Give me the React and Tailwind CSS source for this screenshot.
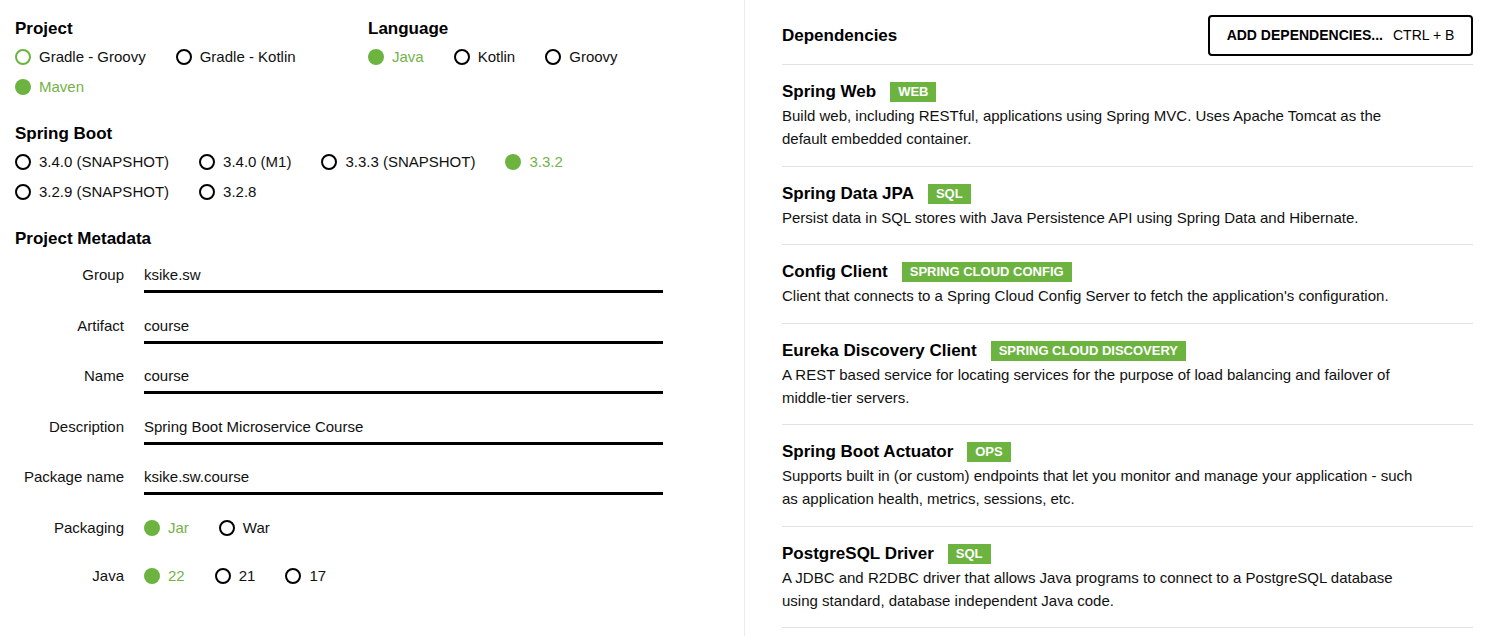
import React, { useState } from 'react';

const GREEN = '#6db33f';

const Radio = ({ label, checked, hover, onSelect }) => {
    return (
        <button
            type="button"
            onClick={onSelect}
            className="mr-[30px] flex h-[30px] items-center whitespace-nowrap"
        >
            {checked ? (
                <span className="h-4 w-4 shrink-0 rounded-full bg-[#6db33f]" />
            ) : (
                <span
                    className={
                        hover
                            ? 'h-4 w-4 shrink-0 rounded-full border-2 border-[#6db33f]'
                            : 'h-4 w-4 shrink-0 rounded-full border-2 border-black'
                    }
                />
            )}
            <span
                className={
                    checked
                        ? 'ml-2 text-[15px] leading-5 text-[#74b249]'
                        : 'ml-2 text-[15px] leading-5 text-[#111]'
                }
            >
                {label}
            </span>
        </button>
    );
};

const RadioGroup = ({ options, value, onChange, hover }) => (
    <div className="flex flex-wrap">
        {options.map((o) => (
            <Radio
                key={o}
                label={o}
                checked={value === o}
                hover={hover === o}
                onSelect={() => onChange(o)}
            />
        ))}
    </div>
);

const Field = ({ label, value, onChange }) => (
    <div className="flex items-start">
        <label className="w-[109px] shrink-0 pt-[11px] text-right text-[15px] leading-5 text-[#111]">
            {label}
        </label>
        <input
            type="text"
            value={value}
            onChange={(e) => onChange(e.target.value)}
            className="ml-5 w-[519px] border-b-[3px] border-black bg-transparent pt-[11px] pb-[5px] text-[15px] leading-5 text-[#111] outline-none"
        />
    </div>
);

const deps = [
    {
        name: 'Spring Web',
        tag: 'WEB',
        desc: 'Build web, including RESTful, applications using Spring MVC. Uses Apache Tomcat as the default embedded container.',
    },
    {
        name: 'Spring Data JPA',
        tag: 'SQL',
        desc: 'Persist data in SQL stores with Java Persistence API using Spring Data and Hibernate.',
    },
    {
        name: 'Config Client',
        tag: 'SPRING CLOUD CONFIG',
        desc: "Client that connects to a Spring Cloud Config Server to fetch the application's configuration.",
    },
    {
        name: 'Eureka Discovery Client',
        tag: 'SPRING CLOUD DISCOVERY',
        desc: 'A REST based service for locating services for the purpose of load balancing and failover of middle-tier servers.',
    },
    {
        name: 'Spring Boot Actuator',
        tag: 'OPS',
        desc: 'Supports built in (or custom) endpoints that let you monitor and manage your application - such as application health, metrics, sessions, etc.',
    },
    {
        name: 'PostgreSQL Driver',
        tag: 'SQL',
        desc: 'A JDBC and R2DBC driver that allows Java programs to connect to a PostgreSQL database using standard, database independent Java code.',
    },
];

const App = () => {
    const [project, setProject] = useState('Maven');
    const [language, setLanguage] = useState('Java');
    const [boot, setBoot] = useState('3.3.2');
    const [packaging, setPackaging] = useState('Jar');
    const [java, setJava] = useState('22');
    const [meta, setMeta] = useState({
        group: 'ksike.sw',
        artifact: 'course',
        name: 'course',
        description: 'Spring Boot Microservice Course',
        packageName: 'ksike.sw.course',
    });

    const setField = (key) => (v) => setMeta({ ...meta, [key]: v });

    return (
        <div
            className="flex h-[636px] w-[1492px] overflow-hidden bg-white text-[#111]"
            style={{ fontFamily: '"Liberation Sans", Arial, sans-serif' }}
        >
            {/* left: project options */}
            <div className="w-[745px] shrink-0 border-r border-[#ececec] pt-[19px] pl-[15px]">
                <div className="flex">
                    <div className="w-[353px]">
                        <h2 className="text-[17px] font-bold leading-5 text-black">Project</h2>
                        <div className="mt-[3px]">
                            <RadioGroup
                                options={['Gradle - Groovy', 'Gradle - Kotlin', 'Maven']}
                                value={project}
                                onChange={setProject}
                                hover="Gradle - Groovy"
                            />
                        </div>
                    </div>
                    <div>
                        <h2 className="text-[17px] font-bold leading-5 text-black">Language</h2>
                        <div className="mt-[3px]">
                            <RadioGroup
                                options={['Java', 'Kotlin', 'Groovy']}
                                value={language}
                                onChange={setLanguage}
                            />
                        </div>
                    </div>
                </div>

                <h2 className="mt-[22px] text-[17px] font-bold leading-5 text-black">Spring Boot</h2>
                <div className="mt-[3px] w-[600px]">
                    <RadioGroup
                        options={[
                            '3.4.0 (SNAPSHOT)',
                            '3.4.0 (M1)',
                            '3.3.3 (SNAPSHOT)',
                            '3.3.2',
                            '3.2.9 (SNAPSHOT)',
                            '3.2.8',
                        ]}
                        value={boot}
                        onChange={setBoot}
                    />
                </div>

                <h2 className="mt-[22px] text-[17px] font-bold leading-5 text-black">Project Metadata</h2>
                <div className="mt-[5px] flex flex-col gap-[11.5px]">
                    <Field label="Group" value={meta.group} onChange={setField('group')} />
                    <Field label="Artifact" value={meta.artifact} onChange={setField('artifact')} />
                    <Field label="Name" value={meta.name} onChange={setField('name')} />
                    <Field
                        label="Description"
                        value={meta.description}
                        onChange={setField('description')}
                    />
                    <Field
                        label="Package name"
                        value={meta.packageName}
                        onChange={setField('packageName')}
                    />
                </div>

                <div className="mt-[18px] flex items-center">
                    <span className="w-[109px] text-right text-[15px] leading-5">Packaging</span>
                    <div className="ml-5">
                        <RadioGroup options={['Jar', 'War']} value={packaging} onChange={setPackaging} />
                    </div>
                </div>
                <div className="mt-[18px] flex items-center">
                    <span className="w-[109px] text-right text-[15px] leading-5">Java</span>
                    <div className="ml-5">
                        <RadioGroup options={['22', '21', '17']} value={java} onChange={setJava} />
                    </div>
                </div>
            </div>

            {/* right: dependencies */}
            <div className="flex-1 pt-[15px] pr-[19px] pl-[37px]">
                <div className="flex h-[41px] items-center justify-between">
                    <h2 className="text-[17px] font-bold leading-5 text-black">Dependencies</h2>
                    <button className="flex h-[41px] w-[265px] items-center justify-center gap-[10px] rounded-[4px] border-2 border-black bg-white text-[14px] text-black">
                        <span className="font-bold">ADD DEPENDENCIES...</span>
                        <span>CTRL + B</span>
                    </button>
                </div>
                <div className="mt-[8px]">
                    {deps.map((d, i) => (
                        <div key={i} className="border-t border-[#e3e3e3] pt-[17px] pb-[15.5px]">
                            <div className="flex items-center">
                                <span className="text-[17px] font-bold leading-5 text-black">{d.name}</span>
                                <span
                                    className="ml-[14px] h-5 px-2 text-[13px] font-bold leading-5 text-white"
                                    style={{ backgroundColor: GREEN }}
                                >
                                    {d.tag}
                                </span>
                            </div>
                            <p className="mt-[2px] max-w-[640px] text-[15px] leading-[23px] text-[#111]">
                                {d.desc}
                            </p>
                        </div>
                    ))}
                    <div className="border-t border-[#e3e3e3]" />
                </div>
            </div>
        </div>
    );
};

export default App;
